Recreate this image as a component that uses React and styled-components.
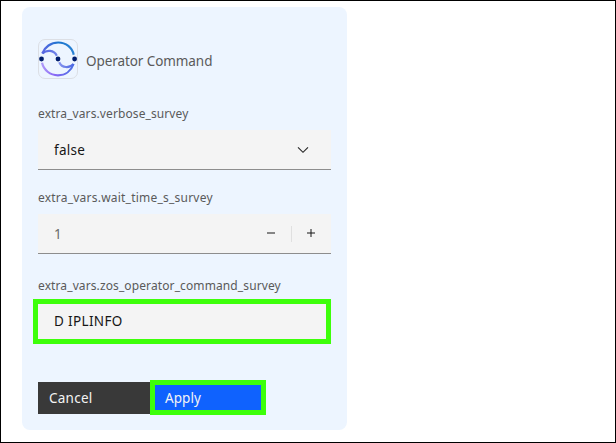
import React from "react";
import styled, { createGlobalStyle } from "styled-components";

const GlobalStyle = createGlobalStyle`
  * { box-sizing: border-box; }
  body { margin: 0; background: #fff; font-family: "Noto Sans", sans-serif; }
`;

const Page = styled.main`
  width: 616px;
  height: 443px;
  padding: 6px 21px;
  border: 1px solid #000;
  overflow: hidden;
`;

const Panel = styled.section`
  display: flex;
  flex-direction: column;
  width: 325px;
  height: 423px;
  padding: 32px 16px 16px;
  border-radius: 8px;
  background: #edf5ff;
`;

const Header = styled.header`
  display: flex;
  align-items: center;
  gap: 8px;
  height: 40px;
  margin-bottom: 27px;
`;

const Logo = styled.div`
  width: 40px;
  height: 40px;
  border: 1px solid #dcdfe5;
  border-radius: 7px;
  svg { display: block; }
`;

const Title = styled.h1`
  margin: 4px 0 0;
  font-size: 13.5px;
  line-height: 18px;
  font-weight: 400;
  letter-spacing: ${(p) => p.$spacing}px;
  color: #5a5a5a;
  white-space: nowrap;
`;

const Field = styled.div`
  margin-bottom: ${(p) => p.$gap}px;
`;

const Label = styled.label`
  display: block;
  height: 16px;
  margin-bottom: ${(p) => p.$gap ?? 8}px;
  font-size: 12px;
  line-height: 16px;
  letter-spacing: ${(p) => p.$spacing}px;
  color: #5a5a5a;
  white-space: nowrap;
`;

const Control = styled.div`
  display: flex;
  align-items: center;
  width: 293px;
  height: 40px;
  padding: 1px 0 0 16px;
  border-bottom: 1px solid #8d8d8d;
  background: #f4f4f4;
`;

const Value = styled.span`
  flex: 1;
  font-size: 13.5px;
  line-height: 18px;
  letter-spacing: ${(p) => p.$spacing ?? 0}px;
  color: ${(p) => (p.$muted ? "#6b6b6b" : "#161616")};
`;

const Chevron = styled.svg`
  width: 16px;
  height: 16px;
  margin-right: 20px;
`;

const Stepper = styled.div`
  display: flex;
  align-items: center;
  height: 16px;
`;

const StepIcon = styled.svg`
  width: ${(p) => p.width}px;
  height: 16px;
  margin-bottom: 2px;
`;

const Divider = styled.span`
  width: 1px;
  height: 16px;
  background: #e0e0e0;
`;

const HighlightedInput = styled.div`
  display: flex;
  align-items: center;
  width: 298px;
  height: 45px;
  margin-left: -5px;
  padding: 0 0 2px 16px;
  border: 5px solid #3dff0a;
  background: #f4f4f4;
`;

const Actions = styled.div`
  display: flex;
  align-items: center;
  height: 35px;
`;

const Button = styled.button`
  width: ${(p) => (p.$primary ? 116 : 112)}px;
  height: ${(p) => (p.$primary ? 35 : 32)}px;
  margin: 0;
  padding: 0 0 0 ${(p) => (p.$primary ? 10 : 11)}px;
  border: ${(p) => (p.$primary ? "5px solid #3dff0a" : "0")};
  background: ${(p) => (p.$primary ? "#0f62fe" : "#393939")};
  color: #f4f4f4;
  font: 400 13.5px/18px "Noto Sans", sans-serif;
  letter-spacing: ${(p) => p.$spacing}px;
  text-align: left;
`;

function OrbitLogo() {
  return (
    <svg width="38" height="38" viewBox="0 0 38 38" fill="none">
      <defs>
        <linearGradient id="upper" x1="4" y1="15" x2="35" y2="15" gradientUnits="userSpaceOnUse">
          <stop stopColor="#5b68e3" />
          <stop offset="0.5" stopColor="#1974ce" />
          <stop offset="1" stopColor="#2a82d3" />
        </linearGradient>
        <linearGradient id="lower" x1="3" y1="24" x2="34" y2="24" gradientUnits="userSpaceOnUse">
          <stop stopColor="#8b65f5" stopOpacity="0.65" />
          <stop offset="0.4" stopColor="#8a68f5" />
          <stop offset="1" stopColor="#4a6ee3" />
        </linearGradient>
        <linearGradient id="hookUpper" x1="4" y1="0" x2="19" y2="0" gradientUnits="userSpaceOnUse">
          <stop stopColor="#5566e2" />
          <stop offset="1" stopColor="#7385e8" />
        </linearGradient>
        <linearGradient id="hookLower" x1="20" y1="0" x2="34" y2="0" gradientUnits="userSpaceOnUse">
          <stop stopColor="#8795ee" />
          <stop offset="1" stopColor="#4d68e2" />
        </linearGradient>
      </defs>
      <path d="M3.3 13.5C5.8 6.8 12 2.5 19.2 2.5c7.8 0 14 5 15.5 12.2" stroke="url(#upper)" strokeWidth="2.2" />
      <path d="M3 22.8C4.7 30 11 35.3 19 35.3c7.3 0 13.2-4.4 15.5-11.3" stroke="url(#lower)" strokeWidth="2.2" />
      <path d="M3.4 13.4C7.5 9.7 15 9.6 17.8 15.8" stroke="url(#hookUpper)" strokeWidth="2.2" />
      <path d="M20.2 22.2C23 28.4 30.5 28.2 34.6 24" stroke="url(#hookLower)" strokeWidth="2.2" />
      <g fill="#001d6c">
        <circle cx="2.5" cy="19" r="2.4" />
        <circle cx="19" cy="19" r="2.4" />
        <circle cx="35.6" cy="19" r="2.4" />
      </g>
    </svg>
  );
}

export default function App() {
  return (
    <>
      <GlobalStyle />
      <Page>
        <Panel>
          <Header>
            <Logo><OrbitLogo /></Logo>
            <Title $spacing={-0.08}>Operator Command</Title>
          </Header>
          <Field $gap={20}>
            <Label $spacing={0.1}>extra_vars.verbose_survey</Label>
            <Control>
              <Value $spacing={0.25}>false</Value>
              <Chevron viewBox="0 0 16 16" fill="none" stroke="#262626" strokeWidth="1.15">
                <path d="M3 5.3 8 10.3 13 5.3" />
              </Chevron>
            </Control>
          </Field>
          <Field $gap={24}>
            <Label $spacing={0.22}>extra_vars.wait_time_s_survey</Label>
            <Control>
              <Value $muted>1</Value>
              <Stepper>
                <StepIcon width="40" viewBox="0 0 40 16">
                  <path d="M16 7h8v2h-8z" fill="#161616" fillOpacity="0.5" />
                </StepIcon>
                <Divider />
                <StepIcon width="39" viewBox="0 0 39 16">
                  <g fill="#161616" fillOpacity="0.5">
                    <path d="M15 7h8v2h-8z" />
                    <path d="M18 4h2v8h-2z" />
                  </g>
                </StepIcon>
              </Stepper>
            </Control>
          </Field>
          <Field $gap={36}>
            <Label $gap={5} $spacing={0.11}>extra_vars.zos_operator_command_survey</Label>
            <HighlightedInput><Value $spacing={0.35}>D IPLINFO</Value></HighlightedInput>
          </Field>
          <Actions>
            <Button $spacing={0.25}>Cancel</Button>
            <Button $primary $spacing={0.05}>Apply</Button>
          </Actions>
        </Panel>
      </Page>
    </>
  );
}
